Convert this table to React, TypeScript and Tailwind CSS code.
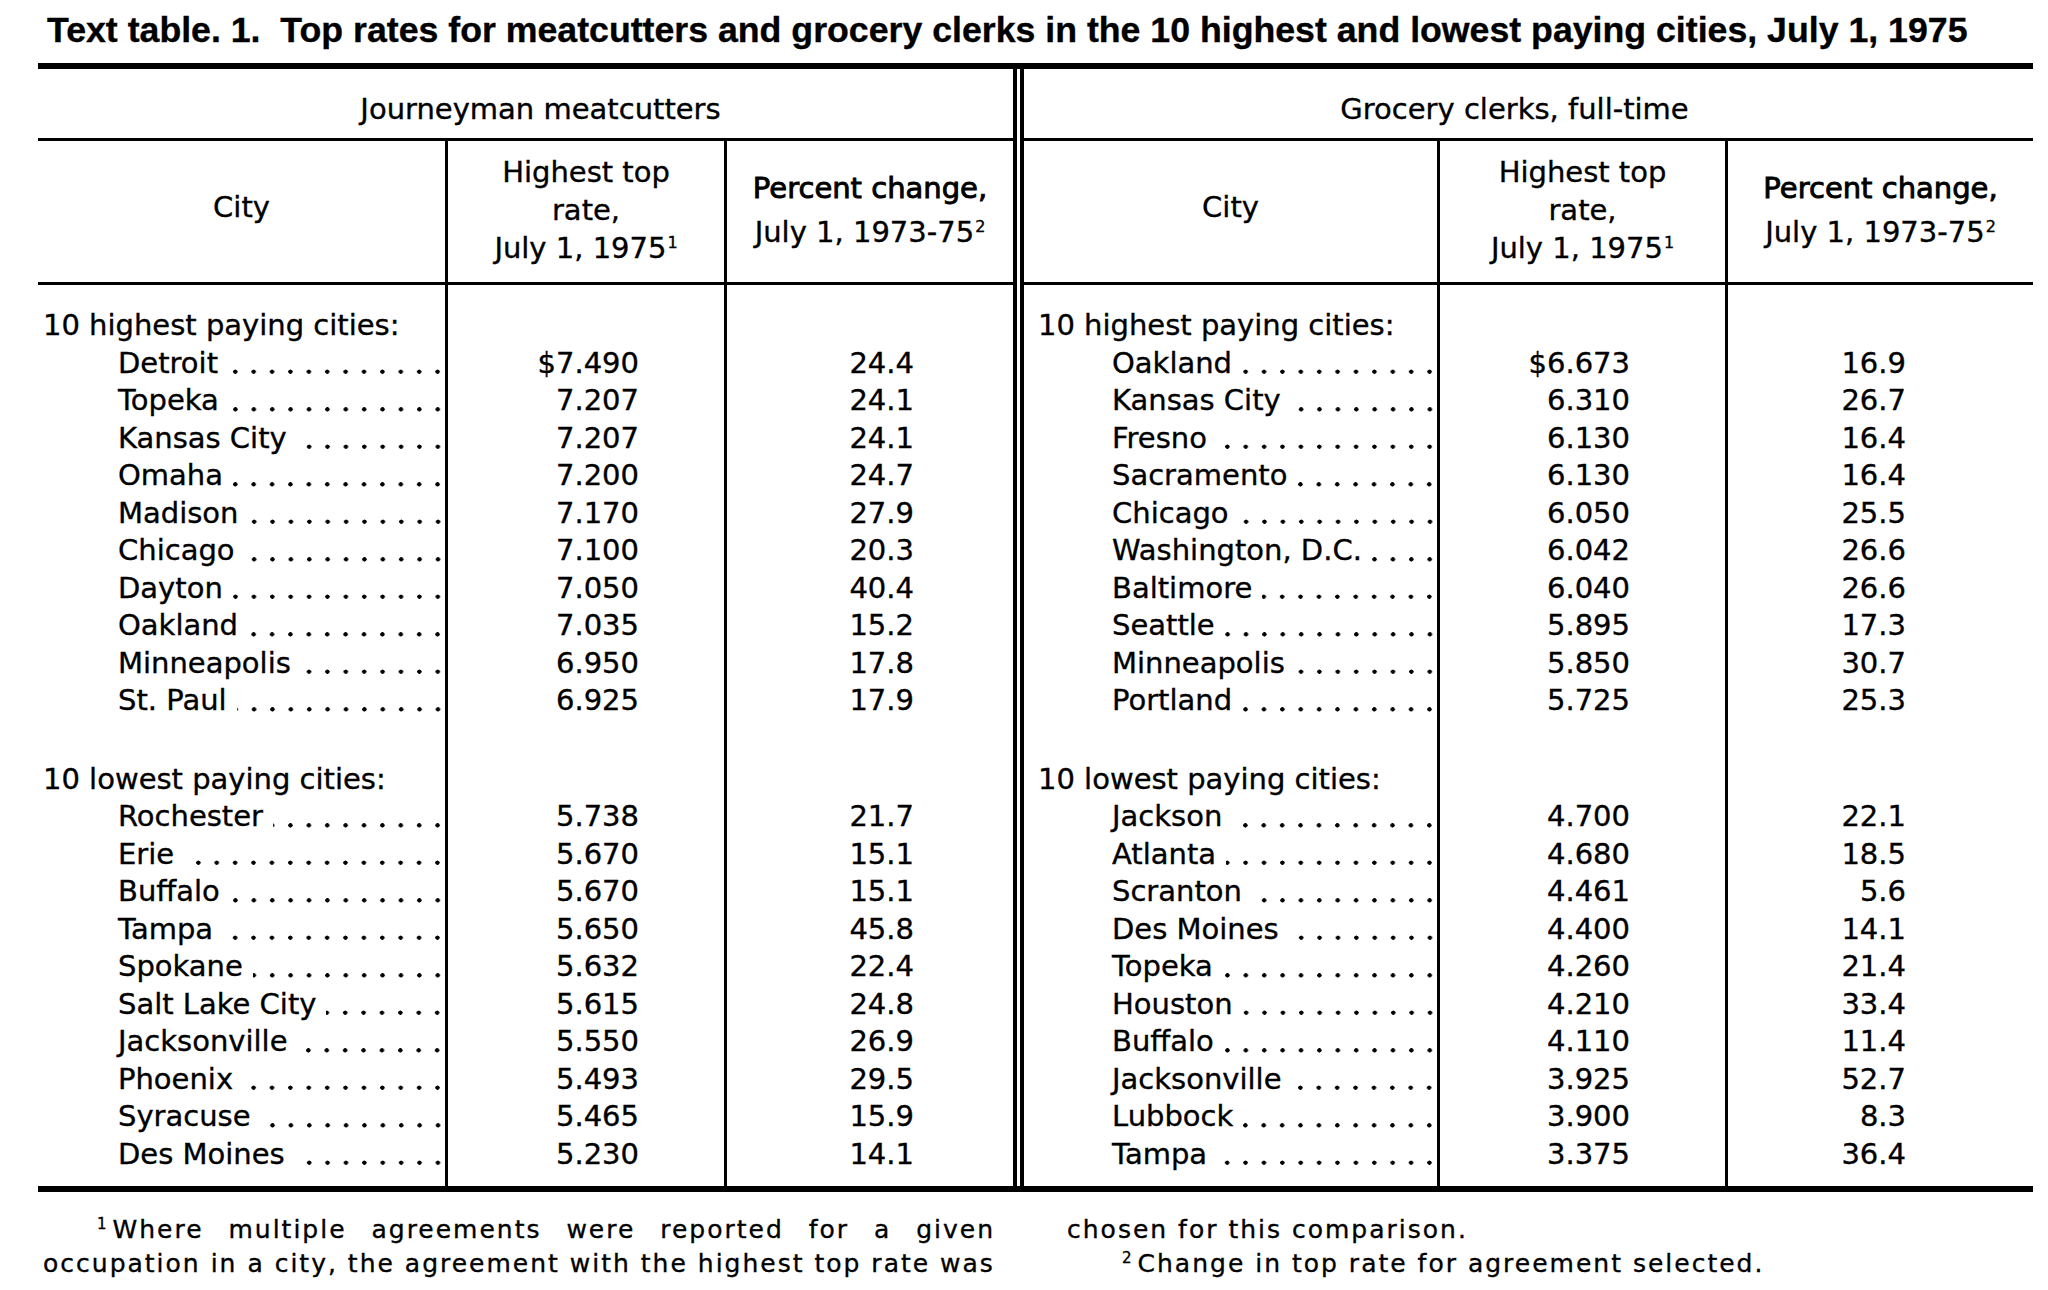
import React from "react";

type Row = [string, string, string];

const leftHigh: Row[] = [
  ["Detroit", "$7.490", "24.4"],
  ["Topeka", "7.207", "24.1"],
  ["Kansas City", "7.207", "24.1"],
  ["Omaha", "7.200", "24.7"],
  ["Madison", "7.170", "27.9"],
  ["Chicago", "7.100", "20.3"],
  ["Dayton", "7.050", "40.4"],
  ["Oakland", "7.035", "15.2"],
  ["Minneapolis", "6.950", "17.8"],
  ["St. Paul", "6.925", "17.9"],
];
const leftLow: Row[] = [
  ["Rochester", "5.738", "21.7"],
  ["Erie", "5.670", "15.1"],
  ["Buffalo", "5.670", "15.1"],
  ["Tampa", "5.650", "45.8"],
  ["Spokane", "5.632", "22.4"],
  ["Salt Lake City", "5.615", "24.8"],
  ["Jacksonville", "5.550", "26.9"],
  ["Phoenix", "5.493", "29.5"],
  ["Syracuse", "5.465", "15.9"],
  ["Des Moines", "5.230", "14.1"],
];
const rightHigh: Row[] = [
  ["Oakland", "$6.673", "16.9"],
  ["Kansas City", "6.310", "26.7"],
  ["Fresno", "6.130", "16.4"],
  ["Sacramento", "6.130", "16.4"],
  ["Chicago", "6.050", "25.5"],
  ["Washington, D.C.", "6.042", "26.6"],
  ["Baltimore", "6.040", "26.6"],
  ["Seattle", "5.895", "17.3"],
  ["Minneapolis", "5.850", "30.7"],
  ["Portland", "5.725", "25.3"],
];
const rightLow: Row[] = [
  ["Jackson", "4.700", "22.1"],
  ["Atlanta", "4.680", "18.5"],
  ["Scranton", "4.461", "5.6"],
  ["Des Moines", "4.400", "14.1"],
  ["Topeka", "4.260", "21.4"],
  ["Houston", "4.210", "33.4"],
  ["Buffalo", "4.110", "11.4"],
  ["Jacksonville", "3.925", "52.7"],
  ["Lubbock", "3.900", "8.3"],
  ["Tampa", "3.375", "36.4"],
];

function Dots() {
  return (
    <div className="flex-1 min-w-0 ml-[10px] h-[37.5px] bg-[radial-gradient(circle_at_13px_27px,black_1.9px,transparent_2.4px)] bg-[length:18.4px_37.5px] bg-right bg-repeat-x" />
  );
}

function Sup({ n }: { n: string }) {
  return <span className="relative top-[-10px] text-[16px] leading-none ml-[1px]">{n}</span>;
}

type TableProps = {
  title: string;
  high: Row[];
  low: Row[];
  outer: string;
  groupCls: string;
  cityCol: string;
  rateCol: string;
  pctCol: string;
  sectionPad: string;
  cityPad: string;
  ratePad: string;
  pctPad: string;
};

function DataTable(p: TableProps) {
  const cityRows = (rows: Row[]) =>
    rows.map((r, i) => (
      <div key={i} className={`h-[37.5px] flex pr-[2px] ${p.cityPad}`}>
        <span className="whitespace-nowrap">{r[0]}</span>
        <Dots />
      </div>
    ));
  const valRows = (rows: Row[], idx: 1 | 2, pad: string) =>
    rows.map((r, i) => (
      <div key={i} className={`h-[37.5px] text-right ${pad}`}>
        {r[idx]}
      </div>
    ));
  return (
    <div className={`flex flex-col ${p.outer}`}>
      <div className={`h-[72px] border-b-[3px] border-black pt-[21px] leading-[38px] text-center whitespace-nowrap ${p.groupCls}`}>
        {p.title}
      </div>
      <div className="flex">
        <div className={`border-r-[3px] border-black ${p.cityCol}`}>
          <div className="h-[144px] border-b-[3px] border-black flex items-center justify-center pb-[8px]">City</div>
          <div className="h-[901px] pt-[22px] leading-[37.5px]">
            <div className={`h-[37.5px] whitespace-nowrap ${p.sectionPad}`}>10 highest paying cities:</div>
            {cityRows(p.high)}
            <div className="h-[41px]" />
            <div className={`h-[37.5px] whitespace-nowrap ${p.sectionPad}`}>10 lowest paying cities:</div>
            {cityRows(p.low)}
          </div>
        </div>
        <div className={`border-r-[3px] border-black ${p.rateCol}`}>
          <div className="h-[144px] border-b-[3px] border-black flex flex-col items-center justify-center leading-[38px] pb-[3px] text-center">
            <div>Highest top</div>
            <div>rate,</div>
            <div className="whitespace-nowrap">
              July 1, 1975
              <Sup n="1" />
            </div>
          </div>
          <div className="h-[901px] pt-[22px] leading-[37.5px]">
            <div className="h-[37.5px]" />
            {valRows(p.high, 1, p.ratePad)}
            <div className="h-[41px]" />
            <div className="h-[37.5px]" />
            {valRows(p.low, 1, p.ratePad)}
          </div>
        </div>
        <div className={p.pctCol}>
          <div className="h-[144px] border-b-[3px] border-black flex flex-col items-center justify-center leading-[44px] pb-[4px] text-center">
            <div className="whitespace-nowrap [-webkit-text-stroke:0.9px_black]">Percent change,</div>
            <div className="whitespace-nowrap">
              July 1, 1973-75
              <Sup n="2" />
            </div>
          </div>
          <div className="h-[901px] pt-[22px] leading-[37.5px]">
            <div className="h-[37.5px]" />
            {valRows(p.high, 2, p.pctPad)}
            <div className="h-[41px]" />
            <div className="h-[37.5px]" />
            {valRows(p.low, 2, p.pctPad)}
          </div>
        </div>
      </div>
    </div>
  );
}

export default function App() {
  return (
    <div className="w-[2048px] h-[1290px] bg-white text-black overflow-hidden font-['DejaVu_Sans',sans-serif] text-[29px] [-webkit-text-stroke:0.35px_black]">
      <div className="ml-[38px] w-[1995px]">
        <div className="pl-[9px] pt-[10px] leading-[40px] text-[35.7px] font-bold font-['Liberation_Sans',Arial,sans-serif] whitespace-nowrap">
          {"Text table. 1.\u00a0 Top rates for meatcutters and grocery clerks in the 10 highest and lowest paying cities, July 1, 1975"}
        </div>
        <div className="mt-[13px] h-[6px] bg-black" />
        <div className="flex">
          <DataTable
            title="Journeyman meatcutters"
            high={leftHigh}
            low={leftLow}
            outer="w-[975px]"
            groupCls="pl-[30px]"
            cityCol="w-[410px]"
            rateCol="w-[279px]"
            pctCol="w-[286px]"
            sectionPad="pl-[5px]"
            cityPad="pl-[80px]"
            ratePad="pr-[85px]"
            pctPad="pr-[99px]"
          />
          <div className="w-[11px] border-x-4 border-black" />
          <DataTable
            title="Grocery clerks, full-time"
            high={rightHigh}
            low={rightLow}
            outer="w-[1009px]"
            groupCls="pr-[28px]"
            cityCol="w-[416px]"
            rateCol="w-[288px]"
            pctCol="w-[305px]"
            sectionPad="pl-[14px]"
            cityPad="pl-[88px]"
            ratePad="pr-[95px]"
            pctPad="pr-[127px]"
          />
        </div>
        <div className="h-[6px] bg-black" />
        <div className="flex mt-[21px] text-[25px] tracking-[2px] leading-[34px]">
          <div className="w-[952px] ml-[5px]">
            <div className="pl-[54px] text-justify [text-align-last:justify]">
              <span className="relative top-[-9px] text-[15px] leading-none mr-[4px]">1</span>
              Where multiple agreements were reported for a given
            </div>
            <div className="whitespace-nowrap">occupation in a city, the agreement with the highest top rate was</div>
          </div>
          <div className="ml-[72px]">
            <div className="whitespace-nowrap">chosen for this comparison.</div>
            <div className="pl-[55px] whitespace-nowrap">
              <span className="relative top-[-9px] text-[15px] leading-none mr-[4px]">2</span>
              Change in top rate for agreement selected.
            </div>
          </div>
        </div>
      </div>
    </div>
  );
}
